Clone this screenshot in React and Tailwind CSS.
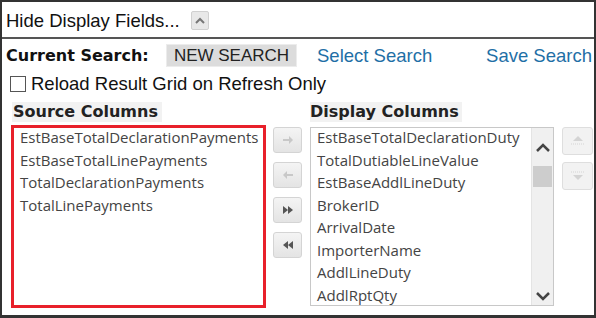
import React, { useState } from 'react'

const sourceCols = [
  'EstBaseTotalDeclarationPayments',
  'EstBaseTotalLinePayments',
  'TotalDeclarationPayments',
  'TotalLinePayments',
]

const displayCols = [
  'EstBaseTotalDeclarationDuty',
  'TotalDutiableLineValue',
  'EstBaseAddlLineDuty',
  'BrokerID',
  'ArrivalDate',
  'ImporterName',
  'AddlLineDuty',
  'AddlRptQty',
]

const ArrowIcon = ({ type }) => {
  if (type === 'right')
    return (
      <svg width="12" height="12" viewBox="0 0 12 12">
        <path d="M1 5h6V2l4 4-4 4V7H1z" fill="#c8c8c8" />
      </svg>
    )
  if (type === 'left')
    return (
      <svg width="12" height="12" viewBox="0 0 12 12">
        <path d="M11 5H5V2L1 6l4 4V7h6z" fill="#c8c8c8" />
      </svg>
    )
  if (type === 'all-right')
    return (
      <svg width="14" height="12" viewBox="0 0 14 12">
        <path d="M2 2l5 4-5 4zM7 2l5 4-5 4z" fill="#555" />
      </svg>
    )
  return (
    <svg width="14" height="12" viewBox="0 0 14 12">
      <path d="M12 2L7 6l5 4zM7 2L2 6l5 4z" fill="#555" />
    </svg>
  )
}

const MoveButton = ({ type }) => (
  <button className="w-[29px] h-[26px] flex items-center justify-center rounded-[3px] border border-[#d4d4d4] bg-gradient-to-b from-[#f4f4f4] to-[#e4e4e4]">
    <ArrowIcon type={type} />
  </button>
)

const OrderButton = ({ up }) => (
  <button className="w-[31px] h-[28px] flex items-center justify-center rounded-[3px] border border-[#dedede] bg-[#f2f2f2]">
    <svg width="18" height="14" viewBox="0 0 18 14">
      {up ? (
        <>
          <path d="M4 7l5-5 5 5z" fill="#d4d4d4" />
          <path d="M2 10h14" stroke="#d4d4d4" strokeDasharray="1 1" />
        </>
      ) : (
        <>
          <path d="M2 3h14" stroke="#d4d4d4" strokeDasharray="1 1" />
          <path d="M4 6l5 5 5-5z" fill="#d4d4d4" />
        </>
      )}
    </svg>
  </button>
)

export default function App() {
  const [reload, setReload] = useState(false)
  return (
    <div className="w-[596px] h-[318px] bg-white border-2 border-[#333] border-b-[3px] flex flex-col font-['Liberation_Sans',Arial,sans-serif] text-[18.5px] text-[#111] overflow-hidden">
      {/* Header */}
      <div className="h-[37px] flex items-center pl-[4px] pt-[2px] border-b-2 border-[#555] shrink-0">
        <span>Hide Display Fields...</span>
        <button className="ml-[11px] w-[18px] h-[19px] flex items-center justify-center rounded-[2px] border border-[#d0d0d0] bg-[#e8e8e8]">
          <svg width="12" height="8" viewBox="0 0 12 8">
            <path d="M2 6l4-4 4 4" stroke="#777" strokeWidth="2" fill="none" />
          </svg>
        </button>
      </div>

      {/* Current search row */}
      <div className="flex items-center h-[33px] pl-[4px] shrink-0">
        <span className="font-['DejaVu_Sans',Verdana,sans-serif] font-bold text-[16px] w-[160px] whitespace-nowrap">Current Search:</span>
        <button className="h-[23px] w-[131px] bg-[#dcdcdc] border border-[#ececec] text-[#222] text-[17px] leading-none whitespace-nowrap">NEW SEARCH</button>
        <a className="ml-[20px] text-[#1f6fa6] whitespace-nowrap">Select Search</a>
        <a className="ml-auto mr-[2px] text-[#1f6fa6] whitespace-nowrap">Save Search</a>
      </div>

      {/* Reload checkbox */}
      <label className="flex items-center pl-[8px] h-[24px] shrink-0">
        <span
          onClick={() => setReload(!reload)}
          className="w-[16px] h-[16px] border border-[#555] bg-white mr-[5px]"
        />
        <span className="whitespace-nowrap">Reload Result Grid on Refresh Only</span>
      </label>

      {/* Columns */}
      <div className="flex pl-[9px] mt-[6px]">
        <div className="flex flex-col">
          <div className="bg-[#f2f2f2] font-['DejaVu_Sans',Verdana,sans-serif] font-bold text-[16px] w-[150px] h-[20px] leading-[20px] pl-[1px] ml-[1px] text-[#222] whitespace-nowrap">Source Columns</div>
          <div className="mt-[3px] w-[255px] h-[183px] border-[3px] border-[#e8202a] pl-[6px] font-['Open_Sans','Noto_Sans',sans-serif] text-[15px] text-[#444]">
            {sourceCols.map((c) => (
              <div key={c} className="h-[22.5px] leading-[18px] whitespace-nowrap">{c}</div>
            ))}
          </div>
        </div>

        <div className="flex flex-col gap-[9px] pt-[25px] ml-[7px]">
          <MoveButton type="right" />
          <MoveButton type="left" />
          <MoveButton type="all-right" />
          <MoveButton type="all-left" />
        </div>

        <div className="flex flex-col ml-[8px]">
          <div className="bg-[#f2f2f2] font-['DejaVu_Sans',Verdana,sans-serif] font-bold text-[16px] w-[152px] h-[20px] leading-[20px] text-[#222] whitespace-nowrap">Display Columns</div>
          <div className="mt-[5px] w-[244px] h-[179px] border border-[#c8c8c8] flex overflow-hidden">
            <div className="flex-1 pl-[6px] font-['Open_Sans','Noto_Sans',sans-serif] text-[15px] text-[#444]">
              {displayCols.map((c) => (
                <div key={c} className="h-[22.5px] leading-[18px] whitespace-nowrap">{c}</div>
              ))}
            </div>
            <div className="w-[22px] bg-[#f0f0f0] border-l border-[#e4e4e4] flex flex-col items-center">
              <svg className="mt-[15px]" width="16" height="10" viewBox="0 0 16 10">
                <path d="M2 8l6-6 6 6" stroke="#444" strokeWidth="2.5" fill="none" />
              </svg>
              <div className="mt-[13px] w-[19px] h-[21px] bg-[#cdcdcd]" />
              <svg className="mt-auto mb-[4px]" width="16" height="10" viewBox="0 0 16 10">
                <path d="M2 2l6 6 6-6" stroke="#444" strokeWidth="2.5" fill="none" />
              </svg>
            </div>
          </div>
        </div>

        <div className="flex flex-col gap-[7px] pt-[25px] ml-[8px]">
          <OrderButton up />
          <OrderButton />
        </div>
      </div>
    </div>
  )
}
